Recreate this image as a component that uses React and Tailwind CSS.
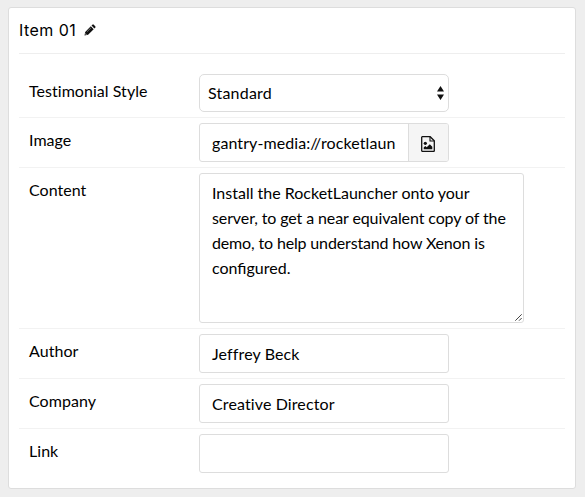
import React from "react";

const box = "border border-[#dddddd] rounded-[3px] bg-white";

function Row({ label, first, children }) {
  return (
    <div
      className={
        first
          ? "flex items-start pt-5 pb-[5px]"
          : "flex items-start border-t border-[#f2f2f2] py-[5px]"
      }
    >
      <div className="w-[180px] shrink-0 pl-[10px] pt-1 leading-[25px] tracking-[0.04px]">{label}</div>
      {children}
    </div>
  );
}

function TextField({ value }) {
  return (
    <div className={`${box} flex h-[39px] w-[250px] items-center px-3 pt-px tracking-[0.12px]`}>
      {value}
    </div>
  );
}

function Pencil() {
  return (
    <svg className="ml-[6px] h-3 w-3" viewBox="0 0 12 12">
      <path
        d="M0.5 11.5 L1.2 7.9 L6.8 2.3 L9.7 5.2 L4.1 10.8 Z M7.5 1.6 L8.6 0.6 Q9.1 0.2 9.6 0.6 L11.4 2.4 Q11.8 2.9 11.4 3.4 L10.4 4.5 Z"
        fill="#111"
      />
      <path d="M2.9 7.9 L7 3.8" stroke="#aaa" strokeWidth="0.6" />
      <path d="M1.5 9.2 L2.8 10.5 L2 10.7 L1.3 10 Z" fill="#fff" />
    </svg>
  );
}

function FileImage() {
  return (
    <svg className="h-4 w-[14px]" viewBox="0 0 14 16" fill="none">
      <path
        d="M1.3 0.7 H9.2 L13.3 4.8 V14.7 Q13.3 15.3 12.7 15.3 H1.3 Q0.7 15.3 0.7 14.7 V1.3 Q0.7 0.7 1.3 0.7 Z"
        stroke="#111"
        strokeWidth="1.3"
      />
      <path d="M9 0.9 V5 H13.1" stroke="#111" strokeWidth="1.1" />
      <circle cx="4.3" cy="7.3" r="1.6" fill="#111" />
      <path d="M2.7 13.3 V11.6 L4.3 10 L5.7 11.3 L8.8 8.2 L11.3 10.7 V13.3 Z" fill="#111" />
    </svg>
  );
}

export default function App() {
  return (
    <div className="h-[497px] w-[585px] bg-[#eeeeee] pl-2 pt-[7px] font-['Lato',sans-serif] text-[16px] text-black">
      <div className="h-[482px] w-[568px] rounded-[3px] border border-[#dddddd] bg-white px-[10px]">
        <div className="flex h-[46px] items-center border-b border-[#eeeeee] pb-[2px]">
          <span className="w-[59px] whitespace-nowrap font-['Inter',sans-serif] text-[16px] leading-6 tracking-[0.45px]">
            Item 01
          </span>
          <Pencil />
        </div>
        <Row label="Testimonial Style" first>
          <div className="flex h-[38px] w-[250px] items-center justify-between rounded-[5px] border border-[#dddddd] bg-white pl-2 pr-1">
            <span className="tracking-[0.2px]">Standard</span>
            <svg className="h-[14px] w-[7px]" viewBox="0 0 7 14">
              <path d="M3.5 0 L7 5.5 H0 Z M0 8.5 H7 L3.5 14 Z" fill="#111" />
            </svg>
          </div>
        </Row>
        <Row label="Image">
          <div className={`${box} flex h-[39px] w-[250px] overflow-hidden`}>
            <div className="flex flex-1 items-center overflow-hidden whitespace-nowrap pl-3 pt-px tracking-[0.09px]">
              gantry-media://rocketlaun
            </div>
            <div className="flex w-10 items-center justify-center border-l border-[#dddddd] bg-[#f5f5f5] pr-[2px] pt-[3px]">
              <FileImage />
            </div>
          </div>
        </Row>
        <Row label="Content">
          <div className={`${box} relative h-[150px] w-[325px] whitespace-nowrap px-3 pt-[6px] leading-[25px]`}>
            <div>Install the RocketLauncher onto your</div>
            <div className="tracking-[-0.11px]">server, to get a near equivalent copy of the</div>
            <div className="tracking-[-0.15px]">demo, to help understand how Xenon is</div>
            <div>configured.</div>
            <svg className="absolute bottom-px right-px h-[7px] w-[7px]" viewBox="0 0 7 7">
              <path d="M0.3 6.7 L6.7 0.3 M4 6.7 L6.7 4" stroke="#444" strokeWidth="1" />
            </svg>
          </div>
        </Row>
        <Row label="Author">
          <TextField value="Jeffrey Beck" />
        </Row>
        <Row label="Company">
          <TextField value="Creative Director" />
        </Row>
        <Row label="Link">
          <TextField value="" />
        </Row>
      </div>
    </div>
  );
}
